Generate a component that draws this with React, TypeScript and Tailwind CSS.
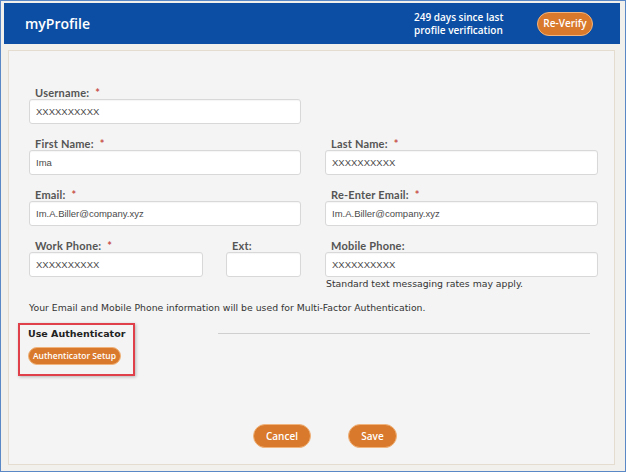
import React from "react";

const labelCls =
  "block h-[13px] pl-[6px] text-[11px] leading-[13px] font-bold text-[#555] tracking-[0.2px] [font-family:Lato,'Open_Sans',sans-serif]";
const inputCls =
  "block h-[25px] w-full rounded-[3px] border border-[#d8d8d8] bg-white px-[6px] text-[9.5px] text-[#4a4a4a] shadow-[inset_0_1px_1px_rgba(0,0,0,0.04)] outline-none [font-family:'Liberation_Sans',Arial,sans-serif]";

function Field({
  label,
  value,
  required,
  className = "",
}: {
  label: string;
  value: string;
  required?: boolean;
  className?: string;
}) {
  return (
    <div className={className}>
      <label className={labelCls}>
        {label}
        {required && <span className="ml-[6px] text-[#c8504a]">*</span>}
      </label>
      <input className={inputCls} defaultValue={value} readOnly />
    </div>
  );
}

const pill =
  "rounded-full border border-[#f0b47c] bg-[#d9792b] text-white [font-family:'Open_Sans',sans-serif]";

export default function App() {
  return (
    <div className="flex h-[472px] w-[626px] flex-col overflow-hidden border border-[#5a87c6] bg-[#f1f0ed]">
      <header className="ml-[3px] mr-[5px] mt-[2px] flex h-[41px] items-center bg-[#0b4ea3] pl-[21px]">
        <h1 className="text-[14px] font-semibold text-white [font-family:'Open_Sans',sans-serif]">
          myProfile
        </h1>
        <div className="ml-auto w-[110px] text-[10px] leading-[13px] font-semibold text-white [font-family:'Open_Sans',sans-serif]">
          249 days since last
          <br />
          profile verification
        </div>
        <button className={`${pill} mr-[27px] ml-[13px] h-[24px] w-[56px] text-[10px] font-semibold`}>
          Re-Verify
        </button>
      </header>

      <main className="ml-[7px] mr-[10px] mt-[6px] h-[415px] border border-[#e3dccf] bg-[#f4f4f4] pl-[20px] pr-[16px] pt-[35px]">
        <div className="flex flex-col gap-y-[13px]">
          <div className="flex gap-[24px]">
            <Field className="w-[272px]" label="Username:" value="XXXXXXXXXX" required />
          </div>
          <div className="flex gap-[24px]">
            <Field className="w-[272px]" label="First Name:" value="Ima" required />
            <Field className="w-[273px]" label="Last Name:" value="XXXXXXXXXX" required />
          </div>
          <div className="flex gap-[24px]">
            <Field className="w-[272px]" label="Email:" value="Im.A.Biller@company.xyz" required />
            <Field className="w-[273px]" label="Re-Enter Email:" value="Im.A.Biller@company.xyz" required />
          </div>
          <div className="flex gap-[24px]">
            <div className="flex w-[272px] gap-[23px]">
              <Field className="w-[174px]" label="Work Phone:" value="XXXXXXXXXX" required />
              <Field className="w-[75px]" label="Ext:" value="" />
            </div>
            <div className="w-[273px]">
              <Field label="Mobile Phone:" value="XXXXXXXXXX" />
              <p className="pl-[1px] text-[9.3px] leading-[13px] text-[#333] [font-family:'DejaVu_Sans',Verdana,sans-serif]">
                Standard text messaging rates may apply.
              </p>
            </div>
          </div>
        </div>

        <p className="mt-[12px] text-[9.3px] leading-[12px] text-[#333] [font-family:'DejaVu_Sans',Verdana,sans-serif]">
          Your Email and Mobile Phone information will be used for Multi-Factor Authentication.
        </p>

        <div className="mt-[9px] flex items-start">
          <div className="ml-[-11px] h-[53px] w-[117px] border-2 border-[#e0404a] pl-[8px] pt-[2px] shadow-[1px_1px_3px_rgba(0,0,0,0.25)]">
            <div className="text-[9.5px] leading-[14px] font-bold text-[#222] [font-family:'DejaVu_Sans',Verdana,sans-serif]">
              Use Authenticator
            </div>
            <button className={`${pill} mt-[5px] h-[18px] w-[93px] text-[8.5px] font-semibold`}>
              Authenticator Setup
            </button>
          </div>
          <div className="ml-[83px] mt-[10px] h-px w-[372px] bg-[#cfcfcf]" />
        </div>

        <div className="mt-[48px] flex gap-[37px] pl-[224px]">
          <button className={`${pill} h-[24px] w-[58px] text-[10px] font-semibold`}>Cancel</button>
          <button className={`${pill} h-[24px] w-[49px] text-[10px] font-semibold`}>Save</button>
        </div>
      </main>
    </div>
  );
}
